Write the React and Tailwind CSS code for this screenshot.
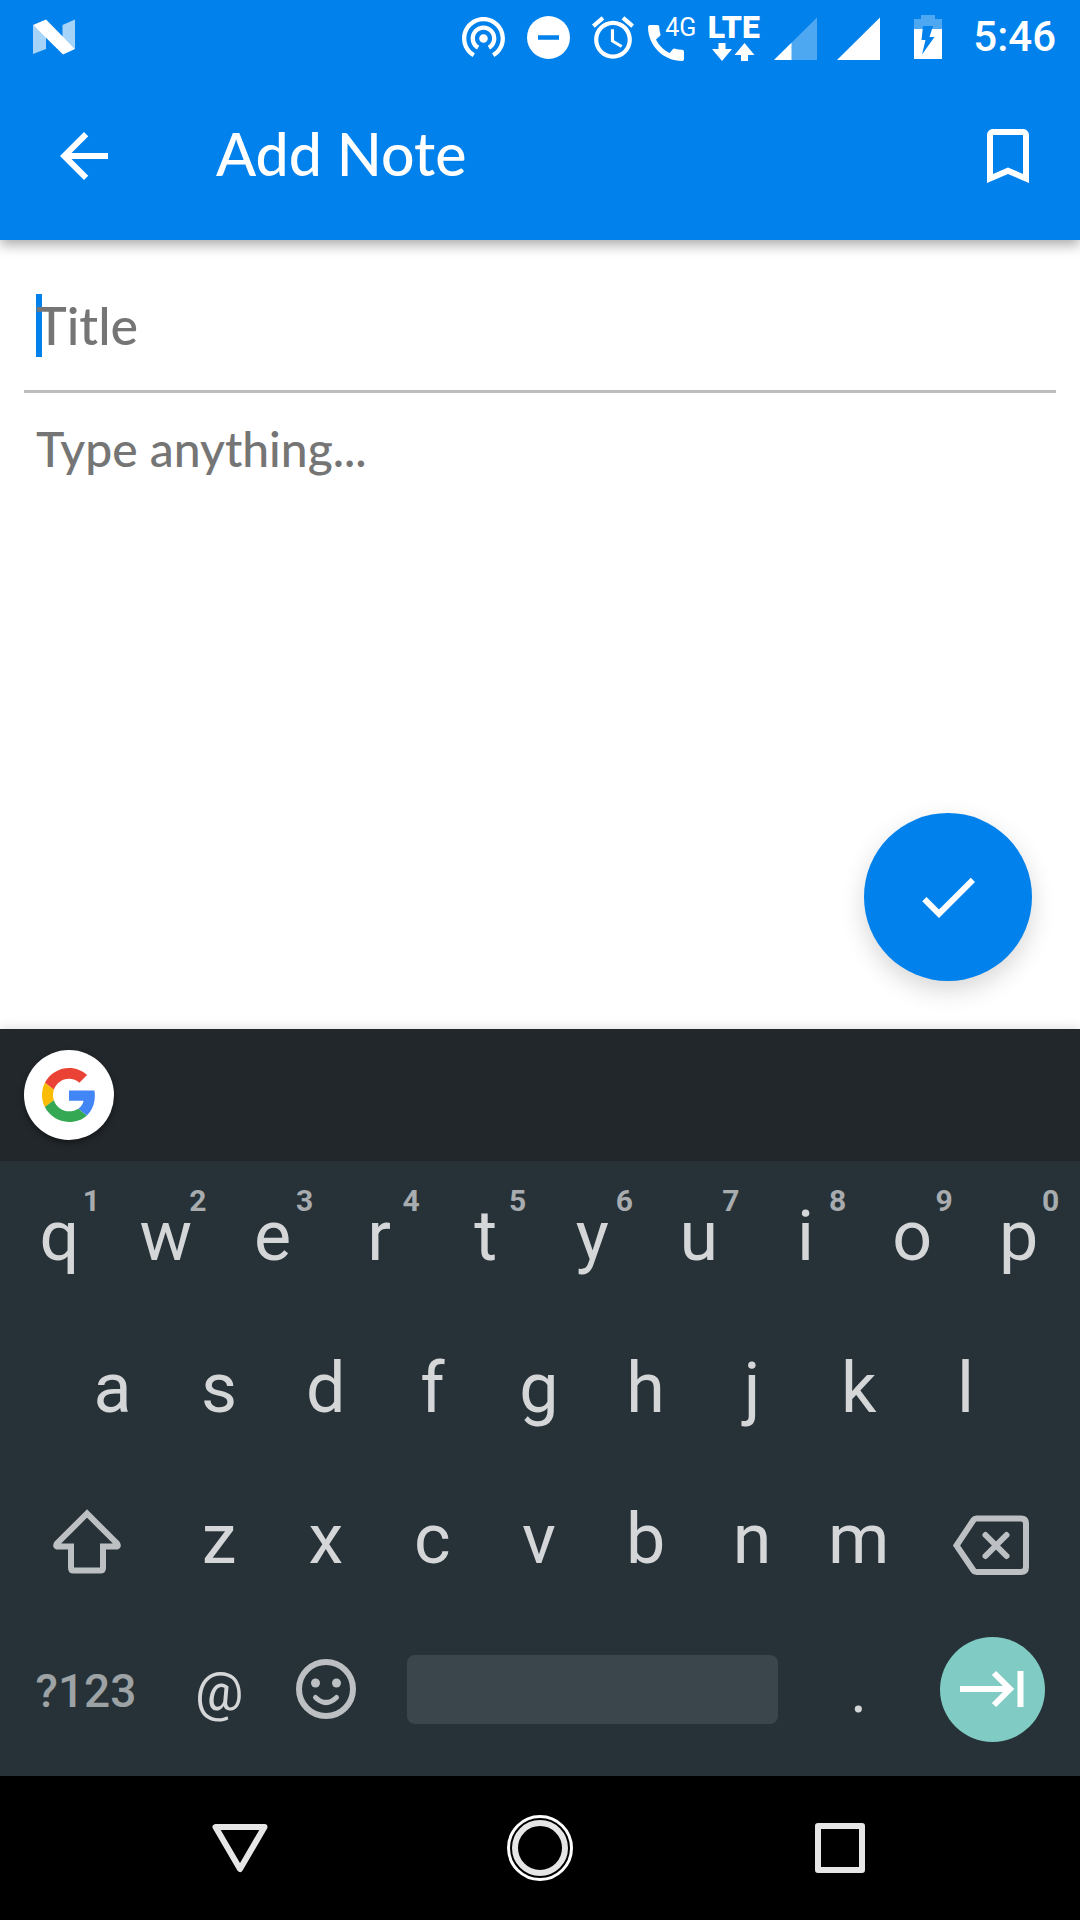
import React from "react";

const TOP_ROW = [
  ["q", "1"], ["w", "2"], ["e", "3"], ["r", "4"], ["t", "5"],
  ["y", "6"], ["u", "7"], ["i", "8"], ["o", "9"], ["p", "0"],
];
const HOME_ROW = ["a", "s", "d", "f", "g", "h", "j", "k", "l"];
const BOTTOM_ROW = ["z", "x", "c", "v", "b", "n", "m"];

function StatusBar() {
  return (
    <div className="flex h-[72px] items-center pl-[33px] pr-6 pt-[2px] text-white">
      <svg className="h-12 w-[42px]" viewBox="0 0 42 48" fill="currentColor" aria-hidden="true">
        <path d="M0 12 13 24V36L0 41Z" opacity=".65" />
        <path d="M29.500 12 42 6.500V36L29.500 24Z" opacity=".65" />
        <path d="M0 12 13 6.500 42 36 30 41.500Z" />
      </svg>
      <div className="ml-auto flex items-center">
        <svg className="h-10 w-[43px]" viewBox="2 3 20 18.65" fill="currentColor" aria-hidden="true">
          <path d="M12 11c-1.100 0-2 .9-2 2s.9 2 2 2 2-.9 2-2-.9-2-2-2zm6 2c0-3.310-2.690-6-6-6s-6 2.690-6 6c0 2.220 1.210 4.150 3 5.190l1-1.740c-1.190-.7-2-1.970-2-3.450 0-2.210 1.790-4 4-4s4 1.790 4 4c0 1.480-.81 2.750-2 3.450l1 1.740c1.790-1.040 3-2.970 3-5.190zM12 3C6.480 3 2 7.480 2 13c0 3.700 2.010 6.920 4.990 8.650l1-1.730C5.610 18.530 4 15.960 4 13c0-4.420 3.580-8 8-8s8 3.580 8 8c0 2.960-1.610 5.530-4 6.920l1 1.730c2.990-1.730 5-4.950 5-8.650 0-5.520-4.480-10-10-10z" />
        </svg>
        <svg className="ml-[22px] size-[43px]" viewBox="0 0 43 43" aria-hidden="true">
          <circle cx="21.500" cy="21.500" r="21.500" fill="#fff" />
          <path d="M11 21.500H32" stroke="#0081eb" strokeWidth="4.500" />
        </svg>
        <svg className="ml-[22px] h-[43px] w-[42px]" viewBox="2 1.86 20 20.14" fill="currentColor" aria-hidden="true">
          <path d="M22 5.720l-4.600-3.860-1.290 1.530 4.600 3.860L22 5.720zM7.880 3.390L6.600 1.860 2 5.710l1.290 1.530 4.590-3.850zM12.500 8H11v6l4.750 2.850.75-1.230-4-2.370V8zM12 4c-4.970 0-9 4.030-9 9s4.020 9 9 9c4.970 0 9-4.030 9-9s-4.030-9-9-9zm0 16c-3.870 0-7-3.130-7-7s3.130-7 7-7 7 3.130 7 7-3.130 7-7 7z" />
        </svg>
        <div className="relative ml-[14px] flex h-12 w-11 items-end">
          <svg className="size-9" viewBox="3 3 18 18" fill="currentColor" aria-hidden="true">
            <path d="M20.010 15.380c-1.230 0-2.420-.2-3.530-.56-.35-.12-.74-.03-1.010.24l-1.570 1.970c-2.830-1.350-5.480-3.900-6.890-6.830l1.950-1.660c.27-.28.35-.67.24-1.020-.37-1.110-.56-2.300-.56-3.530 0-.54-.45-.99-.99-.99H4.190C3.650 3 3 3.240 3 3.990 3 13.280 10.730 21 20.010 21c.71 0 .99-.63.99-1.180v-3.450c0-.54-.45-.99-.99-.99z" />
          </svg>
          <span className="absolute -right-1 top-0 font-[Roboto,sans-serif] text-[25px] leading-[30px]">4G</span>
        </div>
        <div className="ml-4 flex h-12 w-[51px] flex-col items-center justify-between">
          <span className="font-[Roboto,sans-serif] text-[32px] font-black leading-[28px]">LTE</span>
          <svg className="h-[18px] w-11" viewBox="0 0 44 18" fill="currentColor" aria-hidden="true">
            <path d="M6.500 0h7v6H20L10 18 0 6h6.500Z" />
            <path d="M29 18h7v-6h6.500L32.500 0 22.500 12H29Z" />
          </svg>
        </div>
        <svg className="ml-[15px] h-12 w-[43px]" viewBox="0 0 43 48" fill="currentColor" aria-hidden="true">
          <path d="M0 47 43 4.500V47Z" opacity=".3" />
          <path d="M0 47 17.500 29.700V47Z" />
        </svg>
        <svg className="ml-5 h-12 w-[43px]" viewBox="0 0 43 48" fill="currentColor" aria-hidden="true">
          <path d="M0 47 43 4.500V47Z" />
        </svg>
        <svg className="ml-[34px] h-12 w-7" viewBox="0 0 28 48" aria-hidden="true">
          <path d="M7 2H21V6H28V16H0V6H7Z" fill="#fff" opacity=".3" />
          <path d="M0 16H28V46H0Z" fill="#fff" />
          <path d="M9 13H19L15.500 24H20.500L8 41.500 11.500 27H7.500Z" fill="#0081eb" />
        </svg>
        <span className="ml-[31px] font-[Roboto,sans-serif] text-[42px] font-medium leading-[48px]">5:46</span>
      </div>
    </div>
  );
}

function AppBar() {
  return (
    <div className="flex h-[168px] items-center px-9 text-white">
      <button type="button" aria-label="Back" className="px-3">
        <svg className="size-[72px]" viewBox="0 0 24 24" fill="currentColor" aria-hidden="true">
          <path d="M20 11H7.830l5.590-5.590L12 4l-8 8 8 8 1.410-1.410L7.830 13H20v-2z" />
        </svg>
      </button>
      <h1 className="ml-[84px] flex-1 pb-1 font-[Lato,sans-serif] text-[59px] font-medium leading-[72px]">Add Note</h1>
      <button type="button" aria-label="Bookmark">
        <svg className="size-[72px]" viewBox="0 0 24 24" fill="currentColor" aria-hidden="true">
          <path d="M17 3H7c-1.100 0-2 .9-2 2v16l7-3 7 3V5c0-1.100-.9-2-2-2zm0 15l-5-2.180L7 18V5h10v13z" />
        </svg>
      </button>
    </div>
  );
}

function Editor() {
  return (
    <main className="relative flex flex-1 flex-col bg-white px-6 font-[Lato,sans-serif] font-medium">
      <div className="relative border-b-[3px] border-[#bdbdbd] px-3 pb-[33px] pt-[54px]">
        <span className="absolute left-3 top-[54px] h-[63px] w-[6px] bg-[#0081eb]" />
        <input
          type="text"
          aria-label="Title"
          placeholder="Title"
          className="relative block h-[63px] w-full bg-transparent pb-[2px] text-[52px] leading-[60px] text-[#212121] outline-none placeholder:text-[#757575]"
        />
      </div>
      <textarea
        aria-label="Note"
        placeholder="Type anything..."
        className="mx-3 mt-7 flex-1 resize-none bg-transparent text-[48px] leading-[56px] text-[#212121] outline-none placeholder:text-[#757575]"
      />
      <button
        type="button"
        aria-label="Save note"
        className="absolute bottom-12 right-12 flex size-[168px] items-center justify-center rounded-full bg-[#0081eb] text-white shadow-[0_9px_24px_rgba(0,0,0,0.16)]"
      >
        <svg className="size-[72px]" viewBox="0 0 24 24" fill="currentColor" aria-hidden="true">
          <path d="M9 16.170L4.830 12l-1.420 1.410L9 19 21 7l-1.410-1.410z" />
        </svg>
      </button>
    </main>
  );
}

function LetterKey({ letter, hint }) {
  return (
    <button type="button" className="relative col-span-2 flex items-center justify-center text-[70px]">
      {letter}
      {hint && (
        <span className="absolute left-1/2 top-[22px] ml-4 w-8 text-center text-[30px] font-bold leading-9 text-[#a8acaf]">
          {hint}
        </span>
      )}
    </button>
  );
}

function Keyboard() {
  return (
    <section aria-label="Keyboard" className="relative shadow-[0_0_12px_rgba(0,0,0,0.15)]">
      <div className="flex h-[132px] items-center bg-[#22272b] px-6">
        <button
          type="button"
          aria-label="Google search"
          className="flex size-[90px] items-center justify-center rounded-full bg-white shadow-[0_3px_6px_rgba(0,0,0,0.4)]"
        >
          <svg className="size-[54px]" viewBox="0 0 48 48" aria-hidden="true">
            <path fill="#EA4335" d="M24 9.500c3.540 0 6.710 1.220 9.210 3.600l6.850-6.850C35.900 2.380 30.470 0 24 0 14.620 0 6.510 5.380 2.560 13.220l7.980 6.190C12.430 13.720 17.740 9.500 24 9.500z" />
            <path fill="#4285F4" d="M46.980 24.550c0-1.570-.15-3.090-.38-4.550H24v9.020h12.940c-.58 2.960-2.260 5.480-4.780 7.180l7.730 6c4.510-4.180 7.090-10.360 7.090-17.650z" />
            <path fill="#FBBC05" d="M10.530 28.590c-.48-1.450-.76-2.990-.76-4.590s.27-3.140.76-4.590l-7.980-6.190C.92 16.460 0 20.120 0 24c0 3.880.92 7.540 2.560 10.780l7.970-6.190z" />
            <path fill="#34A853" d="M24 48c6.480 0 11.930-2.130 15.890-5.810l-7.730-6c-2.150 1.450-4.920 2.300-8.160 2.300-6.260 0-11.570-4.220-13.470-9.910l-7.980 6.190C6.510 42.620 14.620 48 24 48z" />
          </svg>
        </button>
      </div>
      <div className="grid h-[615px] grid-rows-4 bg-[#263238] pb-[9px] pl-[6px] pr-[8px] font-[Roboto,sans-serif] text-[#d5d6d8]">
        <div className="grid grid-cols-20">
          {TOP_ROW.map(([letter, hint]) => (
            <LetterKey key={letter} letter={letter} hint={hint} />
          ))}
        </div>
        <div className="grid grid-cols-20">
          <span />
          {HOME_ROW.map((letter) => (
            <LetterKey key={letter} letter={letter} />
          ))}
        </div>
        <div className="grid grid-cols-20">
          <button type="button" aria-label="Shift" className="col-span-3 flex items-center justify-center text-[#bdc0c3]">
            <svg className="size-[72px]" viewBox="0 0 72 72" fill="none" stroke="currentColor" strokeWidth="6" aria-hidden="true">
              <path d="M37 9.500 7 39.500Q5 42.500 8 42.500H21V64Q21 66.500 23.500 66.500H50.500Q53 66.500 53 64V42.500H66Q69 42.500 67 39.500Z" />
            </svg>
          </button>
          {BOTTOM_ROW.map((letter) => (
            <LetterKey key={letter} letter={letter} />
          ))}
          <button type="button" aria-label="Backspace" className="col-span-3 flex items-center justify-center text-[#bdc0c3]">
            <svg className="h-[72px] w-20" viewBox="0 0 80 72" fill="none" stroke="currentColor" strokeWidth="6" aria-hidden="true">
              <path d="M4.500 41.500 21.500 16Q22.500 14.500 24.500 14.500H69Q74 14.500 74 19.500V63Q74 68 69 68H24.500Q22.500 68 21.500 66.500Z" />
              <path d="M33.500 31 54.500 52M54.500 31 33.500 52" strokeLinecap="round" />
            </svg>
          </button>
        </div>
        <div className="grid grid-cols-20">
          <button type="button" className="col-span-3 flex items-center justify-center text-[46px] font-medium text-[#9da2a5]">
            ?123
          </button>
          <button type="button" className="col-span-2 flex items-center justify-center text-[54px]">@</button>
          <button type="button" aria-label="Emoji" className="col-span-2 flex items-center justify-center pb-1 text-[#bdc0c3]">
            <svg className="size-[60px]" viewBox="0 0 60 60" fill="none" stroke="currentColor" aria-hidden="true">
              <circle cx="30" cy="30" r="27" strokeWidth="6" />
              <circle cx="19.500" cy="24" r="4.500" fill="currentColor" stroke="none" />
              <circle cx="40.500" cy="24" r="4.500" fill="currentColor" stroke="none" />
              <path d="M19.500 38.500Q30 48.500 40.500 38.500" strokeWidth="5" strokeLinecap="round" />
            </svg>
          </button>
          <button type="button" aria-label="Space" className="col-span-8 flex items-center px-7 pb-1">
            <span className="h-[69px] w-full rounded-lg bg-[#3b464c]" />
          </button>
          <button type="button" className="col-span-2 flex items-center justify-center text-[64px]">.</button>
          <button type="button" aria-label="Next field" className="col-span-3 flex items-center justify-center pb-1">
            <span className="flex size-[105px] items-center justify-center rounded-full bg-[#80cbc4] text-white">
              <svg className="size-[72px]" viewBox="0 0 72 72" fill="none" stroke="currentColor" strokeWidth="6" aria-hidden="true">
                <path d="M4 36H54M38 20 54 36 38 52" />
                <path d="M64.500 18V54" />
              </svg>
            </span>
          </button>
        </div>
      </div>
    </section>
  );
}

function SystemNav() {
  return (
    <nav aria-label="System" className="relative grid h-36 grid-cols-3 bg-black px-[90px] text-[#e6e6e6]">
      <button type="button" aria-label="Back" className="flex items-center justify-center">
        <svg className="size-[66px]" viewBox="0 0 66 66" fill="none" stroke="currentColor" strokeWidth="6" strokeLinejoin="round" aria-hidden="true">
          <path d="M8.500 12H57.500L33 54Z" />
        </svg>
      </button>
      <button type="button" aria-label="Home" className="flex items-center justify-center">
        <svg className="size-[66px]" viewBox="0 0 66 66" fill="none" aria-hidden="true">
          <circle cx="33" cy="33" r="31.500" stroke="#fff" strokeWidth="3" />
          <circle cx="33" cy="33" r="25" stroke="currentColor" strokeWidth="6" />
        </svg>
      </button>
      <button type="button" aria-label="Recent apps" className="flex items-center justify-center">
        <svg className="size-[66px]" viewBox="0 0 66 66" fill="none" stroke="currentColor" strokeWidth="6" strokeLinejoin="round" aria-hidden="true">
          <rect x="11" y="11" width="44" height="44" />
        </svg>
      </button>
    </nav>
  );
}

export default function App() {
  return (
    <div className="flex min-h-screen flex-col bg-white">
      <header className="relative z-10 bg-[#0081eb] shadow-[0_5px_12px_rgba(0,0,0,0.33)]">
        <StatusBar />
        <AppBar />
      </header>
      <Editor />
      <Keyboard />
      <SystemNav />
    </div>
  );
}
